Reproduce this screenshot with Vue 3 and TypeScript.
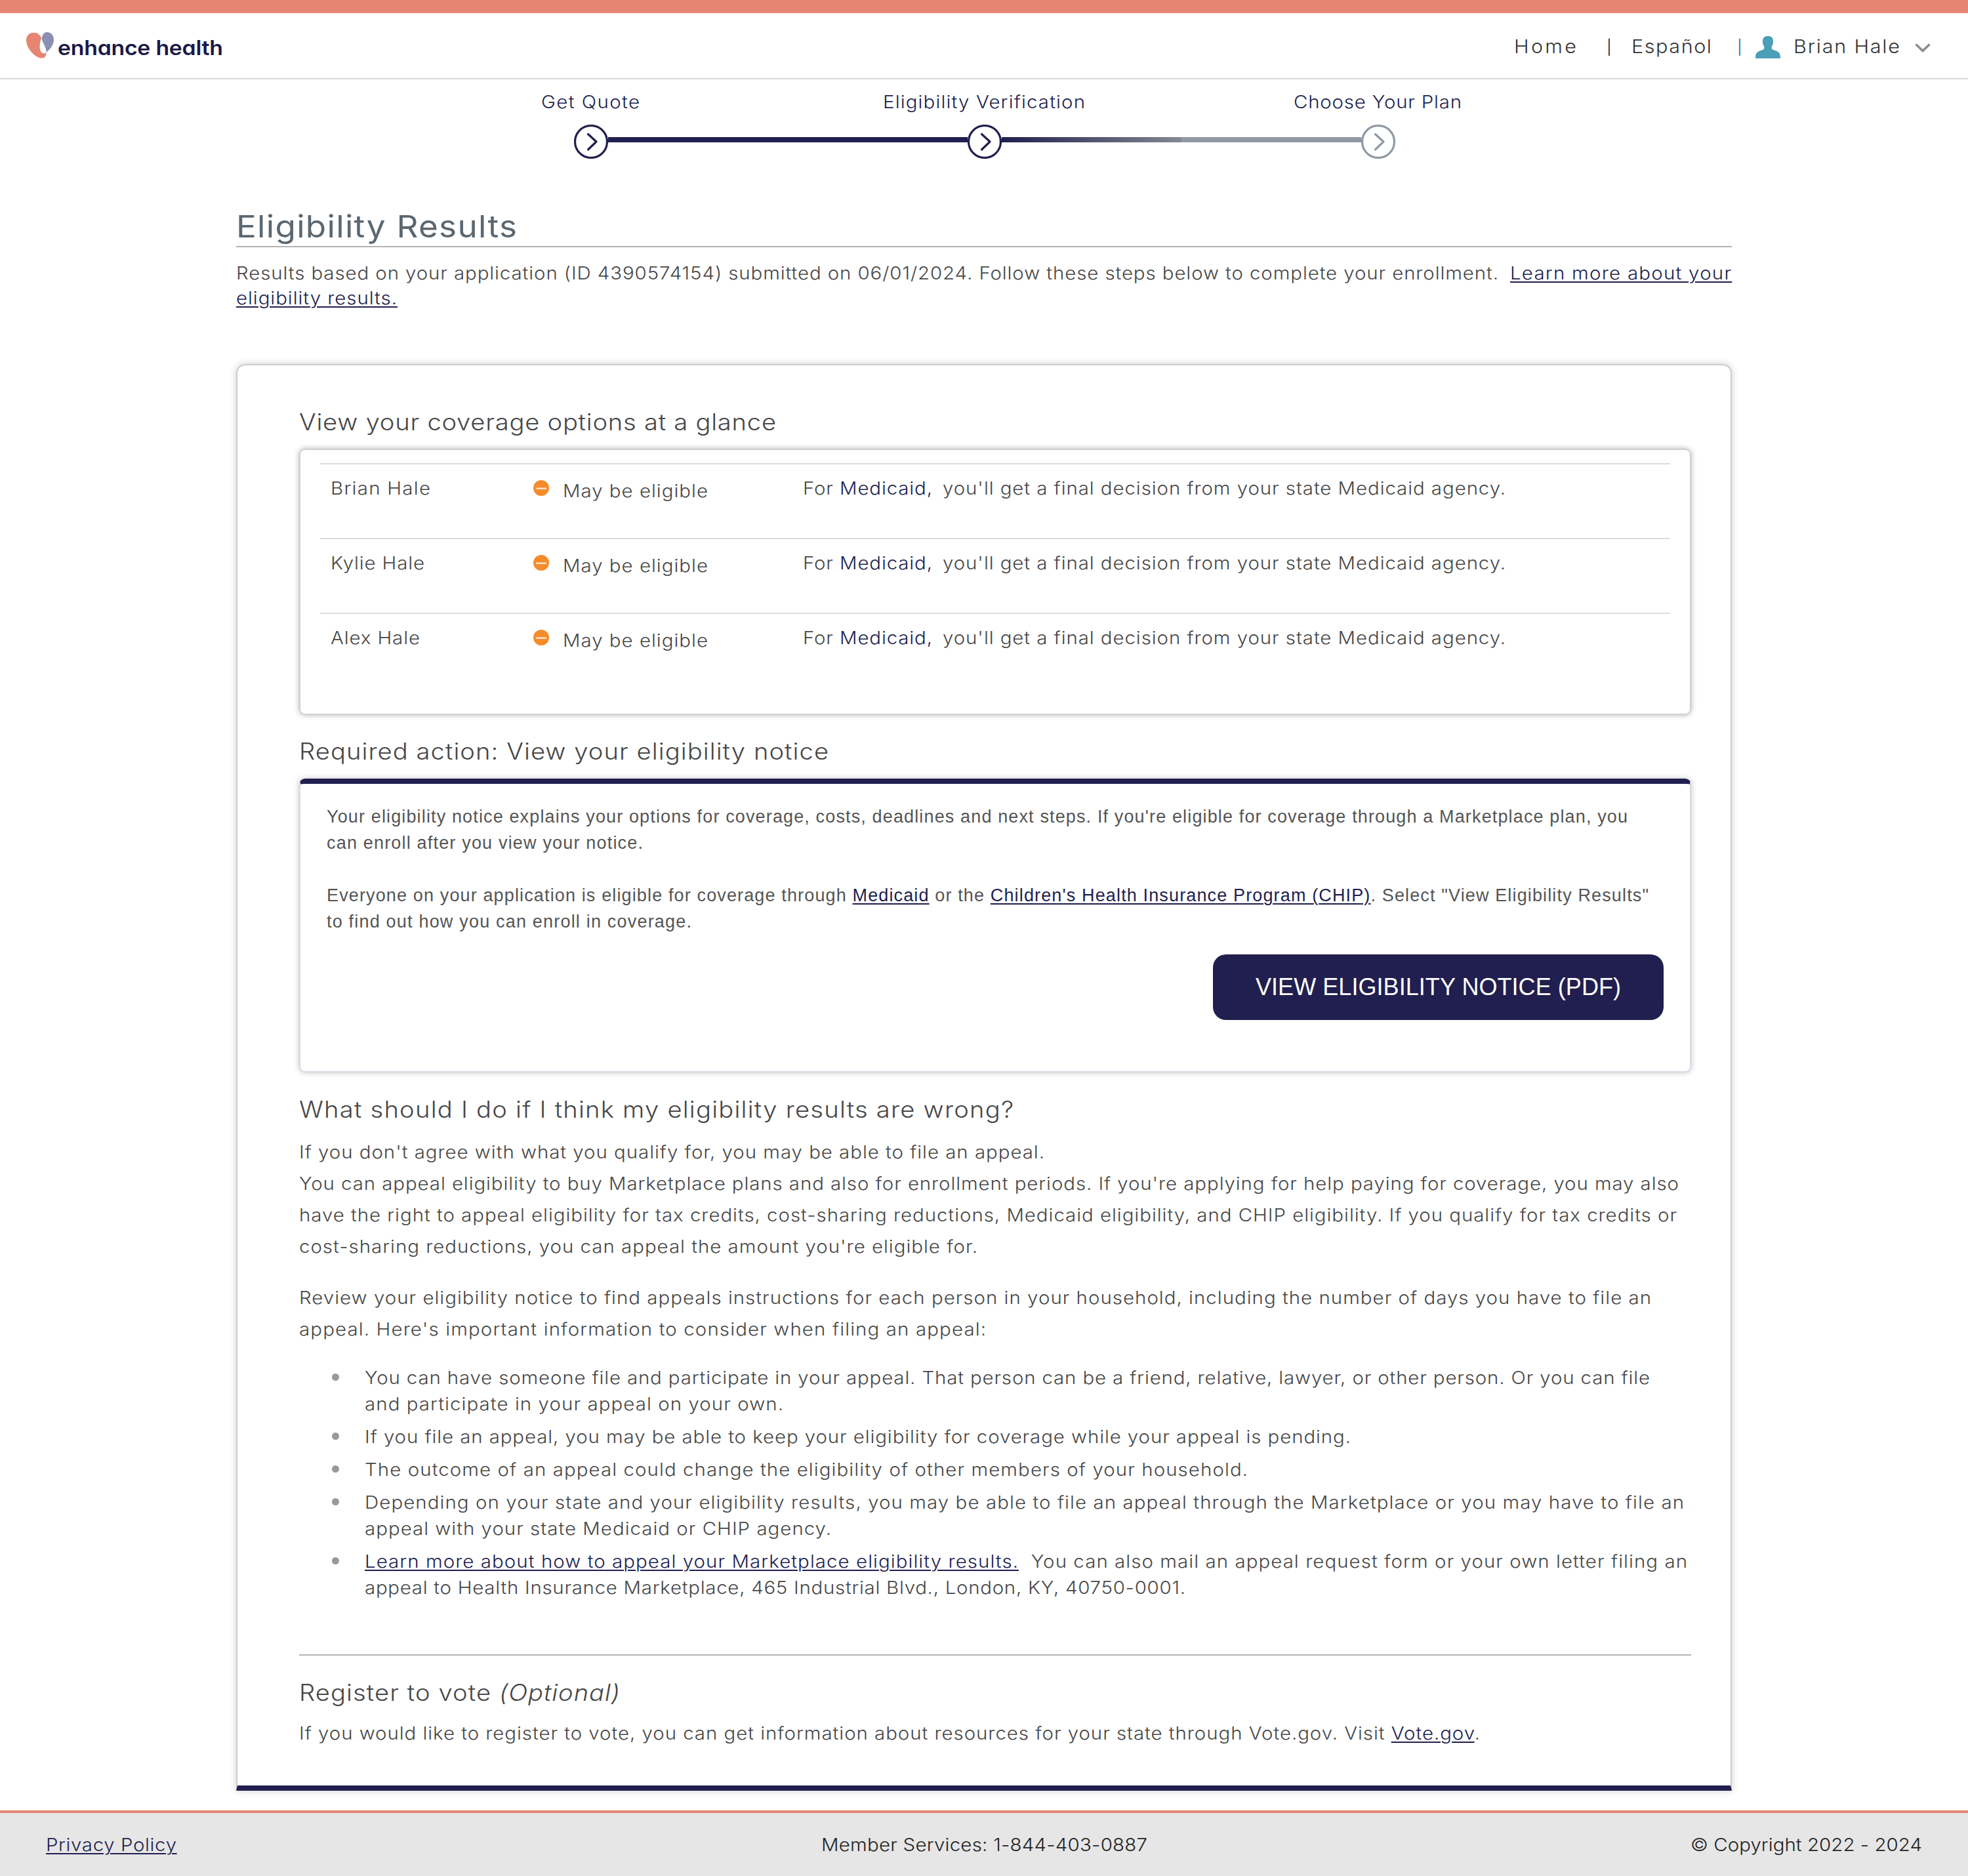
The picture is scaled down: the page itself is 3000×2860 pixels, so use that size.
<script setup lang="ts">
import type { Directive } from 'vue'

interface Member {
  name: string
  width: number
}

interface Line {
  width: number
  text: string
  link?: string
}

// Widens a line of text and tracks it out so that it fills the given measure.
// The plain modifier keeps the letterforms as they are and only tracks them.
const vFit: Directive<HTMLElement, number> = {
  mounted(el, { value, modifiers }) {
    const stretch = modifiers.plain ? 1 : 1.09
    const natural = el.getBoundingClientRect().width
    const count = (el.textContent ?? '').length
    const spacing = (value / stretch - natural) / (count - 1)
    el.style.letterSpacing = `${spacing}px`
    el.style.marginRight = `${value - value / stretch - spacing}px`
    if (!modifiers.plain) {
      el.style.transform = `translateY(1px) scaleX(${stretch})`
    }
  },
}

const steps = [
  { label: 'Get Quote', width: 150, done: true },
  { label: 'Eligibility Verification', width: 308, done: true },
  { label: 'Choose Your Plan', width: 256, done: false },
]

const members: Member[] = [
  { name: 'Brian Hale', width: 152 },
  { name: 'Kylie Hale', width: 143 },
  { name: 'Alex Hale', width: 136 },
]

const appeal: Line[] = [
  { text: "If you don't agree with what you qualify for, you may be able to file an appeal.", width: 1136 },
  { text: "You can appeal eligibility to buy Marketplace plans and also for enrollment periods. If you're applying for help paying for coverage, you may also", width: 2103 },
  { text: 'have the right to appeal eligibility for tax credits, cost-sharing reductions, Medicaid eligibility, and CHIP eligibility. If you qualify for tax credits or', width: 2100 },
  { text: "cost-sharing reductions, you can appeal the amount you're eligible for.", width: 1034 },
]

const review: Line[] = [
  { text: 'Review your eligibility notice to find appeals instructions for each person in your household, including the number of days you have to file an', width: 2061 },
  { text: "appeal. Here's important information to consider when filing an appeal:", width: 1047 },
]

const bullets: Line[][] = [
  [
    { text: 'You can have someone file and participate in your appeal. That person can be a friend, relative, lawyer, or other person. Or you can file', width: 1959 },
    { text: 'and participate in your appeal on your own.', width: 638 },
  ],
  [{ text: 'If you file an appeal, you may be able to keep your eligibility for coverage while your appeal is pending.', width: 1503 }],
  [{ text: 'The outcome of an appeal could change the eligibility of other members of your household.', width: 1346 }],
  [
    { text: 'Depending on your state and your eligibility results, you may be able to file an appeal through the Marketplace or you may have to file an', width: 2011 },
    { text: 'appeal with your state Medicaid or CHIP agency.', width: 711 },
  ],
  [
    { link: 'Learn more about how to appeal your Marketplace eligibility results.', text: '\u00a0 You can also mail an appeal request form or your own letter filing an', width: 2016 },
    { text: 'appeal to Health Insurance Marketplace, 465 Industrial Blvd., London, KY, 40750-0001.', width: 1251 },
  ],
]
</script>

<template>
  <div class="page">
    <header class="header">
      <div class="logo">
        <svg class="heart" width="42" height="40" viewBox="0 0 42 40">
          <path fill="#e68572" d="M23.2 9.5C21.5 4 17 .7 11.500 .7 4.500 .7 0 5.500 0 12.500 0 24 13 39.600 24 39.600c4.500 0 6.800-3.500 6.300-9.300-1.500 2.200-3.300 2.600-5.200 1.700C21.500 30.200 20.400 25.500 20.600 20.500c.2-4.500 1-8 2.600-11z" />
          <path fill="#8a90b4" d="M23.500 10.500C24.800 4 27 0 31.500 0 37.800 0 42 5 42 11.500c0 7-4.500 13.500-11 19.300C30.200 23.500 26.200 18 23.500 10.500z" />
        </svg>
        <span v-fit="252" class="brand fit">enhance health</span>
      </div>
      <nav class="nav">
        <a v-fit="95" class="fit home">Home</a>
        <span class="bar">|</span>
        <a v-fit="122" class="fit lang">Español</a>
        <span class="bar second">|</span>
        <svg class="person" width="38" height="34" viewBox="0 0 38 34">
          <path fill="#4a9fb8" d="M19 0c5.200 0 8 2.600 8 8 0 3.600-.8 6-2 7.800-.8 1.300-.7 3.400.8 4.400 2.400 1.500 6 2 8.600 3.900C37 26 38 28.500 38 34H0c0-5.500 1-8 3.600-9.900 2.600-1.900 6.200-2.400 8.600-3.900 1.500-1 1.600-3.100.8-4.400C11.800 14 11 11.600 11 8c0-5.400 2.800-8 8-8z" />
        </svg>
        <span v-fit="162" class="fit user">Brian Hale</span>
        <svg class="caret" width="24" height="14" viewBox="0 0 24 14">
          <path fill="none" stroke="#8c8c8c" stroke-width="3.500" d="M1.500 1.500 12 11.500 22.500 1.500" />
        </svg>
      </nav>
    </header>

    <section class="stepper">
      <div class="labels">
        <div v-for="s in steps" :key="s.label" class="label">
          <span v-fit="s.width" class="fit">{{ s.label }}</span>
        </div>
      </div>
      <div class="track">
        <template v-for="(s, i) in steps" :key="s.label">
          <div v-if="i > 0" class="rail" :class="{ half: i === 2 }"></div>
          <svg class="dot" :class="{ off: !s.done }" width="52" height="52" viewBox="0 0 52 52">
            <circle cx="26" cy="26" r="24.500" />
            <path d="M21.500 14.500 34 26 21.500 38" />
          </svg>
        </template>
      </div>
    </section>

    <main class="main">
      <h1 class="title"><span v-fit="428" class="fit">Eligibility Results</span></h1>
      <div class="intro">
        <div class="split">
          <span v-fit="1924" class="fit">Results based on your application (ID 4390574154) submitted on 06/01/2024. Follow these steps below to complete your enrollment.</span>
          <a v-fit="337" class="fit">Learn more about your</a>
        </div>
        <div><a v-fit="245" class="fit">eligibility results.</a></div>
      </div>

      <div class="card">
        <h2><span v-fit="727" class="fit">View your coverage options at a glance</span></h2>
        <div class="glance">
          <div v-for="m in members" :key="m.name" class="row">
            <div class="name"><span v-fit="m.width" class="fit">{{ m.name }}</span></div>
            <div class="status">
              <svg width="24" height="24" viewBox="0 0 24 24">
                <circle cx="12" cy="12" r="12" fill="#f68b2c" />
                <path d="M4 12.700h16" stroke="#fde3cb" stroke-width="2.500" />
              </svg>
              <span v-fit="221" class="fit">May be eligible</span>
            </div>
            <div class="split detail">
              <span v-fit="197" class="fit">For <b>Medicaid,</b></span>
              <span v-fit="858" class="fit">you'll get a final decision from your state Medicaid agency.</span>
            </div>
          </div>
        </div>

        <h2 class="second-head"><span v-fit="807" class="fit">Required action: View your eligibility notice</span></h2>
        <div class="notice">
          <div><span v-fit.plain="1983" class="fit">Your eligibility notice explains your options for coverage, costs, deadlines and next steps. If you're eligible for coverage through a Marketplace plan, you</span></div>
          <div><span v-fit.plain="482" class="fit">can enroll after you view your notice.</span></div>
          <div class="gap"><span v-fit.plain="2015" class="fit">Everyone on your application is eligible for coverage through <a>Medicaid</a> or the <a>Children's Health Insurance Program (CHIP)</a>. Select "View Eligibility Results"</span></div>
          <div><span v-fit.plain="556" class="fit">to find out how you can enroll in coverage.</span></div>
          <button class="button"><span v-fit.plain="557" class="fit">VIEW ELIGIBILITY NOTICE (PDF)</span></button>
        </div>

        <h2 class="wrong-head"><span v-fit="1089" class="fit">What should I do if I think my eligibility results are wrong?</span></h2>
        <div class="copy">
          <div v-for="l in appeal" :key="l.text"><span v-fit="l.width" class="fit">{{ l.text }}</span></div>
        </div>
        <div class="copy review">
          <div v-for="l in review" :key="l.text"><span v-fit="l.width" class="fit">{{ l.text }}</span></div>
        </div>
        <ul class="list">
          <li v-for="(b, i) in bullets" :key="i">
            <div>
              <div v-for="l in b" :key="l.text"><span v-fit="l.width" class="fit"><a v-if="l.link">{{ l.link }}</a>{{ l.text }}</span></div>
            </div>
          </li>
        </ul>

        <div class="rule"></div>
        <h2 class="vote-head"><span v-fit="292" class="fit">Register to vote</span><i v-fit="184" class="fit">(Optional)</i></h2>
        <div class="copy vote"><span v-fit="1800" class="fit">If you would like to register to vote, you can get information about resources for your state through Vote.gov. Visit <a>Vote.gov</a>.</span></div>
      </div>
    </main>

    <footer class="footer">
      <div><a v-fit="199" class="fit">Privacy Policy</a></div>
      <div class="mid"><span v-fit="497" class="fit">Member Services: 1-844-403-0887</span></div>
      <div class="end"><span v-fit="353" class="fit">© Copyright 2022 - 2024</span></div>
    </footer>
  </div>
</template>

<style>
body {
  margin: 0;
  background: #fff;
}
</style>

<style scoped>
.page {
  width: 3000px;
  height: 2860px;
  overflow: hidden;
  font-family: Inter, "Noto Sans", sans-serif;
  font-size: 27px;
  font-weight: 300;
  line-height: 38px;
  color: #474747;
}
.page * {
  box-sizing: border-box;
}
.fit {
  display: inline-block;
  white-space: nowrap;
  transform-origin: 0 50%;
}
a {
  color: #211f4f;
  text-decoration: underline;
  text-decoration-thickness: 2px;
  text-underline-offset: 3px;
}
.header {
  height: 121px;
  border-top: 20px solid #e68572;
  border-bottom: 2px solid #d9d9d9;
  display: flex;
  align-items: center;
  justify-content: space-between;
  padding: 0 57px 0 40px;
}
.logo {
  display: flex;
  align-items: center;
}
.heart {
  margin-bottom: 2px;
}
.brand {
  margin-left: 6px;
  font-size: 31px;
  font-weight: 600;
  font-feature-settings: "cv11";
  color: #1b1946;
  padding-top: 4px;
}
.nav {
  display: flex;
  align-items: center;
  font-size: 28px;
  color: #333;
}
.nav a {
  color: #333;
  text-decoration: none;
}
.bar {
  width: 10px;
  text-align: center;
  margin: 4px 29px 0 45px;
  font-size: 22px;
  font-weight: 400;
  color: #211f4f;
}
.bar.second {
  margin: 4px 19px 0 38px;
  color: #2f6fa8;
}
.person {
  margin-top: 5px;
}
.user {
  margin-left: 20px;
}
.caret {
  margin: 7px 0 0 23px;
}
.stepper {
  padding-top: 17px;
  color: #211f4f;
}
.labels {
  width: 1800px;
  margin: 0 auto;
  display: grid;
  grid-template-columns: repeat(3, 1fr);
  line-height: 34px;
  height: 34px;
}
.label {
  display: flex;
  justify-content: center;
}
.track {
  width: 1252px;
  height: 52px;
  margin: 18px 0 0 875px;
  display: flex;
  align-items: center;
}
.rail {
  flex: 1;
  height: 8px;
  margin-bottom: 6px;
  background: #211f4f;
}
.rail.half {
  background: linear-gradient(90deg, #211f4f 0%, #838891 50%, #8f99a5 50%, #8f99a5 100%);
}
.dot {
  fill: none;
  stroke: #211f4f;
  stroke-width: 3.2;
  stroke-linecap: round;
  stroke-linejoin: round;
}
.dot.off {
  stroke: #8f99a5;
}
.main {
  width: 2280px;
  margin: 74px auto 0;
}
.title {
  margin: 0;
  height: 61px;
  border-bottom: 2px solid #b3b3b3;
  font-size: 47px;
  line-height: 56px;
  font-weight: 400;
  color: #5b6770;
}
.intro {
  margin-top: 20px;
}
.split {
  display: flex;
}
.intro .split {
  gap: 18px;
}
.card {
  margin-top: 82px;
  height: 2175px;
  border: 2px solid #ccc;
  border-bottom: 8px solid #211f4f;
  border-radius: 14px 14px 0 0;
  box-shadow: 0 0 12px rgba(0, 0, 0, 0.2);
  padding: 63px 60px 0 94px;
}
h2 {
  margin: 0;
  height: 44px;
  font-size: 35px;
  line-height: 44px;
  font-weight: 300;
  color: #474747;
}
.glance {
  margin-top: 20px;
  height: 406px;
  border: 2px solid #d0d0d0;
  border-radius: 9px;
  box-shadow: 0 0 8px rgba(0, 0, 0, 0.3);
  padding: 20px 30px 0;
}
.row {
  height: 114px;
  border-top: 2px solid #dcdcdc;
  padding: 17px 0 0 16px;
  display: grid;
  grid-template-columns: 309px 411px 1fr;
}
.row b {
  font-weight: 350;
  color: #211f4f;
}
.detail {
  gap: 16px;
}
.status {
  display: flex;
  align-items: flex-start;
}
.status svg {
  margin: 7px 21px 0 0;
}
.status span {
  margin-top: 4px;
}
.second-head {
  margin-top: 32px;
}
.notice {
  margin-top: 21px;
  height: 448px;
  border: 2px solid #dbd8e6;
  border-top: 8px solid #211f4f;
  border-radius: 9px;
  box-shadow: 0 0 8px rgba(0, 0, 0, 0.25);
  padding: 30px 40px 0 40px;
  font-family: "Liberation Sans", Arial, sans-serif;
  font-size: 27px;
  font-weight: 400;
  line-height: 40px;
  color: #555;
}
.notice .gap {
  margin-top: 40px;
}
.button {
  display: flex;
  justify-content: center;
  align-items: center;
  margin: 30px 0 0 auto;
  width: 687px;
  height: 100px;
  padding: 0;
  border: 0;
  border-radius: 20px;
  background: #211f4f;
  color: #fff;
  font: 36px "Liberation Sans", Arial, sans-serif;
}
.wrong-head {
  margin-top: 33px;
}
.copy {
  margin-top: 20px;
  line-height: 48px;
}
.review {
  margin-top: 30px;
}
.list {
  list-style: none;
  margin: 30px 0 0;
  padding: 0;
  line-height: 40px;
}
.list li {
  display: flex;
}
.list li + li {
  margin-top: 10px;
}
.list li::before {
  content: "";
  flex: none;
  width: 11px;
  height: 11px;
  margin: 14px 39px 0 50px;
  border-radius: 50%;
  background: #999;
}
.rule {
  margin-top: 82px;
  height: 2px;
  background: #b3b3b3;
}
.vote-head {
  margin-top: 33px;
  display: flex;
}
.vote-head i {
  margin-left: 13px;
}
.vote {
  margin-top: 17px;
}
.footer {
  margin-top: 30px;
  height: 100px;
  border-top: 4px solid #e68572;
  background: #e6e6e6;
  padding: 0 70px;
  display: grid;
  grid-template-columns: 1fr auto 1fr;
  align-items: center;
  color: #222;
}
.end {
  text-align: right;
}
</style>
